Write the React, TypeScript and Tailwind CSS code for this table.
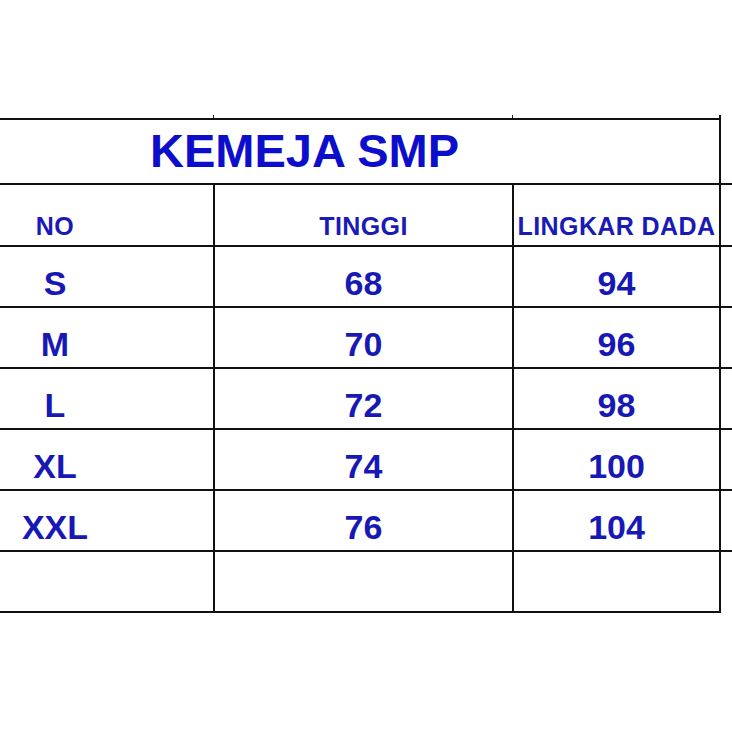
import React from "react";

const rows: [string, string, string][] = [
  ["S", "68", "94"],
  ["M", "70", "96"],
  ["L", "72", "98"],
  ["XL", "74", "100"],
  ["XXL", "76", "104"],
  ["", "", ""],
];

function Row({ a, b, c, last, header }: { a: string; b: string; c: string; last?: boolean; header?: boolean }) {
  const text = header
    ? "text-[25px] tracking-[0.4px] leading-none font-bold text-[#1a1ab4]"
    : "text-[34px] leading-none font-bold text-[#1818b4]";
  return (
    <div className={`flex ${header ? "h-[62px]" : "h-[61px]"} border-b-2 border-[#111] ${last ? "w-[721px]" : "w-full"}`}>
      <div className="w-[215px] border-r-2 border-[#111] flex items-end pb-[6px]">
        <div className={`w-[110px] text-center ${text}`}>{a}</div>
      </div>
      <div className={`w-[299px] border-r-2 border-[#111] flex items-end justify-center pb-[6px] ${text}`}>{b}</div>
      <div className={`w-[207px] border-r-2 border-[#111] flex items-end justify-center pb-[6px] whitespace-nowrap ${text}`}>{c}</div>
    </div>
  );
}

export default function App() {
  return (
    <div className="w-[732px] h-[732px] bg-white overflow-hidden" style={{ fontFamily: '"Liberation Sans", Arial, sans-serif' }}>
      <div className="pt-[115px]">
        <div className="flex h-[3px]">
          <div className="ml-[213px] w-[1px] h-full bg-[#222]" />
          <div className="ml-[298px] w-[1px] h-full bg-[#222]" />
          <div className="ml-[206px] w-[2px] h-full bg-[#111]" />
        </div>
        <div className="w-full h-[67px] border-b-2 border-[#111]">
          <div className="w-[721px] h-full border-t-2 border-r-2 border-[#111] flex items-center pl-[150px] pb-[3px]">
            <span className="text-[47px] leading-none font-bold text-[#0d0dcc]">KEMEJA SMP</span>
          </div>
        </div>
        <Row a="NO" b="TINGGI" c="LINGKAR DADA" header />
        {rows.map((r, i) => (
          <Row key={i} a={r[0]} b={r[1]} c={r[2]} last={i === rows.length - 1} />
        ))}
      </div>
    </div>
  );
}
